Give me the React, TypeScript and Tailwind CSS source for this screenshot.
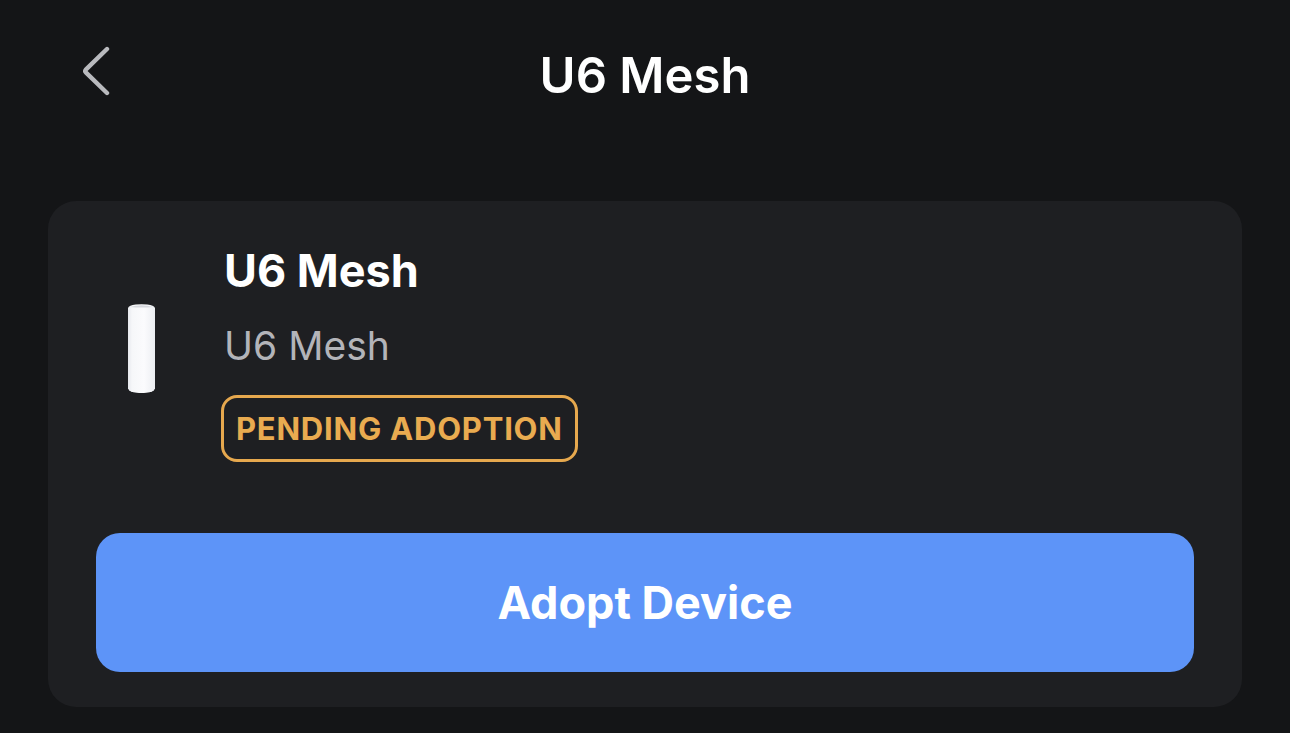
function BackIcon() {
  return (
    <svg width="28" height="50" viewBox="0 0 28 50" fill="none" aria-hidden="true">
      <path
        d="M25 3 L3.8 23.6 Q2.6 25 3.8 26.4 L25 47"
        stroke="#b9babe"
        strokeWidth="4.4"
        strokeLinecap="round"
        strokeLinejoin="round"
      />
    </svg>
  );
}

function AccessPoint() {
  return (
    <svg width="27" height="90" viewBox="0 0 28 90" preserveAspectRatio="none" role="img" aria-label="Access point">
      <defs>
        <linearGradient id="body" x1="0" x2="1" y1="0" y2="0">
          <stop offset="0" stopColor="#e6e8ed" />
          <stop offset="0.15" stopColor="#f6f7f9" />
          <stop offset="0.6" stopColor="#fbfbfd" />
          <stop offset="1" stopColor="#eceef2" />
        </linearGradient>
      </defs>
      <path
        d="M0 4 Q1 1 8 0.4 Q14 0 20 0.4 Q27 1 28 4 V84.5 Q26.5 88.2 19 88.8 Q14 89.2 9 88.8 Q1.5 88.2 0 84.5 Z"
        fill="url(#body)"
      />
      <path d="M2 3 Q14 -0.6 26 3 Q14 4 2 3 Z" fill="#d5d7dd" />
    </svg>
  );
}

export default function App() {
  return (
    <div className="min-h-screen bg-[#141517] pb-6 font-['Inter',sans-serif] text-white">
      <header className="grid grid-cols-[1fr_auto_1fr] items-start px-20 pt-11 pb-[93px]">
        <button type="button" aria-label="Back" className="justify-self-start pt-0.5 pl-0.5">
          <BackIcon />
        </button>
        <h1 className="text-[49px] leading-[64px] font-semibold">U6 Mesh</h1>
      </header>

      <main className="px-12">
        <section className="rounded-[28px] bg-[#1e1f22] px-12 pt-[34px] pb-[35px]">
          <div className="flex items-center gap-[34px]">
            <div className="flex w-[91px] justify-center">
              <AccessPoint />
            </div>
            <div className="flex flex-col items-start">
              <h2 className="px-[3px] text-[45px] leading-[72px] font-bold">U6 Mesh</h2>
              <p className="mt-3 px-[3px] text-[39px] leading-[54px] font-normal text-[#b3b4b9]">U6 Mesh</p>
              <span className="mt-[22px] rounded-2xl border-3 border-[#e6a84e] px-3 text-[31px] leading-[61px] font-bold tracking-wide text-[#e9ab50]">
                PENDING ADOPTION
              </span>
            </div>
          </div>
          <button
            type="button"
            className="mt-[71px] h-[139px] w-full rounded-3xl bg-[#5d94f8] text-[45px] font-bold"
          >
            Adopt Device
          </button>
        </section>
      </main>
    </div>
  );
}
